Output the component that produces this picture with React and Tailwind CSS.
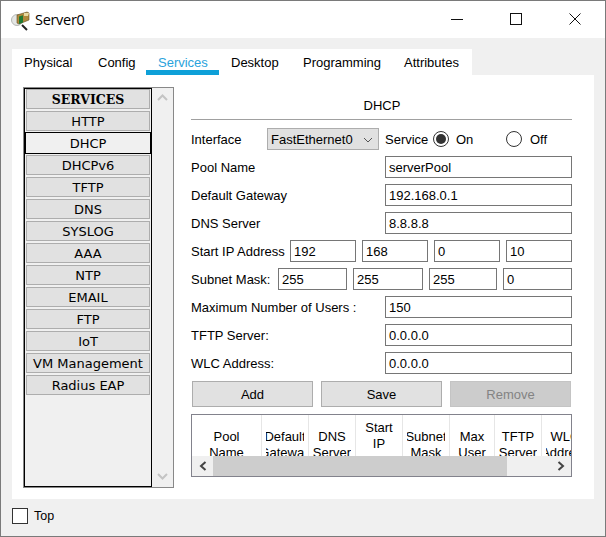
import React from 'react';

const services = ['HTTP', 'DHCP', 'DHCPv6', 'TFTP', 'DNS', 'SYSLOG', 'AAA', 'NTP', 'EMAIL', 'FTP', 'IoT', 'VM Management', 'Radius EAP'];
const tabs = [
  { name: 'Physical', w: 'w-[74px]' },
  { name: 'Config', w: 'w-[60px]' },
  { name: 'Services', w: 'w-[73px]' },
  { name: 'Desktop', w: 'w-[72px]' },
  { name: 'Programming', w: 'w-[101px]' },
  { name: 'Attributes', w: 'w-[80px]' },
];
const columns = [
  { w: 'w-[70px]', lines: ['Pool', 'Name'] },
  { w: 'w-[47px]', lines: ['Default', 'Gateway'] },
  { w: 'w-[47px]', lines: ['DNS', 'Server'] },
  { w: 'w-[47px]', lines: ['Start', 'IP'], up: true },
  { w: 'w-[47px]', lines: ['Subnet', 'Mask'] },
  { w: 'w-[45px]', lines: ['Max', 'User'] },
  { w: 'w-[47px]', lines: ['TFTP', 'Server'] },
  { w: 'w-[47px]', lines: ['WLC', 'Address'] },
];

function ServerIcon() {
  return (
    <svg width="22" height="22" viewBox="0 0 22 22" className="shrink-0">
      <circle cx="8" cy="11" r="5.500" fill="#e4e6e4" stroke="#b5b8b5" />
      <path d="M13 16l5 5" stroke="#222" strokeWidth="2" />
      <path d="M8 6l10-3 2 1v7l-10 4-2-1z" fill="#b08a3c" stroke="#5f4c22" strokeWidth="0.6" />
      <path d="M10 7.500l4-1.200v7.200l-4 1.400z" fill="#1f7a32" />
      <path d="M15 4l5 0-1 3-4 0z" fill="#e8d9a0" />
    </svg>
  );
}

function Field({ value, className }) {
  return (
    <div className={`h-[22px] border border-[#767676] bg-white pl-[3px] pt-[1px] flex items-center text-black ${className}`}>
      {value}
    </div>
  );
}

function Row({ label, value }) {
  return (
    <div className="h-[22px] flex items-center justify-between">
      <span className="pt-[1px]">{label}</span>
      <Field value={value} className="w-[187px]" />
    </div>
  );
}

function Radio({ on }) {
  return (
    <span className="w-[16px] h-[16px] rounded-full border border-[#333] bg-white flex items-center justify-center">
      {on && <span className="w-[10px] h-[10px] rounded-full bg-[#333]" />}
    </span>
  );
}

export default function App() {
  return (
    <div className="w-[606px] h-[537px] border border-[#7a7a7a] bg-[#f0f0f0] flex flex-col overflow-hidden font-['Liberation_Sans',sans-serif] text-[13px] text-black">
      {/* Title bar */}
      <div className="h-[37px] bg-white flex items-center justify-between shrink-0">
        <div className="flex items-center gap-[4px] pl-[8px]">
          <ServerIcon />
          <span className="text-[14.500px] font-['Open_Sans',sans-serif] tracking-[-0.3px]">Server0</span>
        </div>
        <div className="flex items-center gap-[47px] pr-[24px] pb-[1px]">
          <svg width="12" height="12" viewBox="0 0 12 12"><path d="M0 6.500h12" stroke="#111" /></svg>
          <svg width="12" height="12" viewBox="0 0 12 12"><rect x="0.500" y="0.500" width="11" height="11" fill="none" stroke="#111" /></svg>
          <svg width="12" height="12" viewBox="0 0 12 12"><path d="M0.500 0.500l11 11M11.500 0.500l-11 11" stroke="#111" /></svg>
        </div>
      </div>

      {/* Tabs */}
      <div className="mt-[11px] ml-[11px] w-[460px] h-[26px] bg-white flex shrink-0">
        {tabs.map((t) => (
          <div
            key={t.name}
            className={`${t.w} pl-[12px] h-[26px] pt-[4px] border-b-[5px] ${t.name === 'Services' ? 'text-[#29a3dc] border-[#0ea0d8]' : 'border-transparent'}`}
          >
            {t.name}
          </div>
        ))}
      </div>

      {/* Panel */}
      <div className="ml-[11px] w-[582px] h-[424px] bg-white flex shrink-0 pt-[12px] pl-[11px]">
        <div className="w-[151px] h-[401px] border border-[#888] flex shrink-0">
          <div className="w-[128px] border border-black bg-[#f0f0f0] flex flex-col gap-[2px] px-[1px] font-['DejaVu_Sans',sans-serif]">
            <div className="h-[20px] pt-[2px] bg-[#e1e1e1] border border-[#adadad] flex items-center justify-center font-['DejaVu_Serif',serif] font-bold text-[12.500px]">SERVICES</div>
            {services.map((s) =>
              s === 'DHCP' ? (
                <div key={s} className="h-[22px] pt-[1px] -mx-[1px] -my-[1px] bg-[#f0f0f0] border border-black flex items-center justify-center">{s}</div>
              ) : (
                <div key={s} className="h-[20px] pt-[1px] bg-[#e1e1e1] border border-[#adadad] flex items-center justify-center">{s}</div>
              )
            )}
          </div>
          <div className="flex-1 bg-[#f0f0f0] flex flex-col items-center justify-between pt-[6px] pb-[7px]">
            <svg width="11" height="7" viewBox="0 0 11 7"><path d="M1 6l4.500-4.500L10 6" fill="none" stroke="#c4c4c4" strokeWidth="2" /></svg>
            <svg width="11" height="7" viewBox="0 0 11 7"><path d="M1 1l4.500 4.500L10 1" fill="none" stroke="#c4c4c4" strokeWidth="2" /></svg>
          </div>
        </div>

        {/* DHCP form */}
        <div className="ml-[17px] w-[381px] flex flex-col">
          <div className="h-[33px] border-b border-[#a0a0a0] flex items-center justify-center pt-[5px] pl-[1px]">DHCP</div>
          <div className="mt-[8px] h-[22px] flex items-center">
            <span className="w-[76px] pt-[1px]">Interface</span>
            <div className="w-[112px] h-[22px] pt-[1px] bg-[#e1e1e1] border border-[#adadad] flex items-center justify-between pl-[3px] pr-[5px]">
              <span>FastEthernet0</span>
              <svg width="10" height="6" viewBox="0 0 10 6"><path d="M1 1l4 4 4-4" fill="none" stroke="#555" /></svg>
            </div>
            <span className="ml-[6px] w-[48px] pt-[1px]">Service</span>
            <Radio on />
            <span className="ml-[7px] w-[50px] pt-[1px]">On</span>
            <Radio />
            <span className="ml-[8px] pt-[1px]">Off</span>
          </div>
          <div className="mt-[6px] flex flex-col gap-[6px]">
            <Row label="Pool Name" value="serverPool" />
            <Row label="Default Gateway" value="192.168.0.1" />
            <Row label="DNS Server" value="8.8.8.8" />
            <div className="h-[22px] flex items-center">
              <span className="w-[99px] pt-[1px]">Start IP Address</span>
              <div className="flex gap-[6px]">
                {['192', '168', '0', '10'].map((v, i) => <Field key={i} value={v} className="w-[66px]" />)}
              </div>
            </div>
            <div className="h-[22px] flex items-center">
              <span className="w-[87px] pt-[1px]">Subnet Mask:</span>
              <Field value="255" className="w-[69px]" />
              <Field value="255" className="w-[70px] ml-[6px]" />
              <Field value="255" className="w-[68px] ml-[6px]" />
              <Field value="0" className="w-[69px] ml-[6px]" />
            </div>
            <Row label="Maximum Number of Users :" value="150" />
            <Row label="TFTP Server:" value="0.0.0.0" />
            <Row label="WLC Address:" value="0.0.0.0" />
          </div>
          <div className="mt-[7px] pl-[1px] flex gap-[8px]">
            <button className="w-[121px] h-[26px] pt-[1px] bg-[#e1e1e1] border border-[#adadad]">Add</button>
            <button className="w-[121px] h-[26px] pt-[1px] bg-[#e1e1e1] border border-[#adadad]">Save</button>
            <button className="w-[121px] h-[26px] pt-[1px] bg-[#cccccc] border border-[#c4c4c4] text-[#838383]">Remove</button>
          </div>

          {/* Pool table */}
          <div className="mt-[7px] h-[63px] border border-[#82828c] flex flex-col bg-white">
            <div className="h-[41px] flex overflow-hidden shrink-0">
              {columns.map((c) => (
                <div key={c.lines[0]} className={`${c.w} shrink-0 border-r border-[#e6e6e6] px-[4px]`}>
                  <div className={`h-full overflow-hidden flex flex-col items-center leading-[16px] ${c.up ? 'pt-[5px]' : 'pt-[14px]'}`}>
                    {c.lines.map((l) => <span key={l} className="whitespace-nowrap">{l}</span>)}
                  </div>
                </div>
              ))}
            </div>
            <div className="flex-1 bg-[#f0f0f0] flex items-center">
              <div className="w-[21px] flex justify-center">
                <svg width="8" height="10" viewBox="0 0 8 10"><path d="M6.500 1L2 5l4.500 4" fill="none" stroke="#444" strokeWidth="2" /></svg>
              </div>
              <div className="w-[294px] h-full bg-[#cdcdcd]" />
              <div className="flex-1 flex justify-end pr-[6px]">
                <svg width="8" height="10" viewBox="0 0 8 10"><path d="M1.500 1L6 5 1.500 9" fill="none" stroke="#444" strokeWidth="2" /></svg>
              </div>
            </div>
          </div>
        </div>
      </div>

      {/* Footer */}
      <div className="flex items-center mt-[8px] ml-[11px] gap-[6px]">
        <span className="w-[16px] h-[16px] border border-[#333] bg-white" />
        <span className="text-[12.500px]">Top</span>
      </div>
    </div>
  );
}
